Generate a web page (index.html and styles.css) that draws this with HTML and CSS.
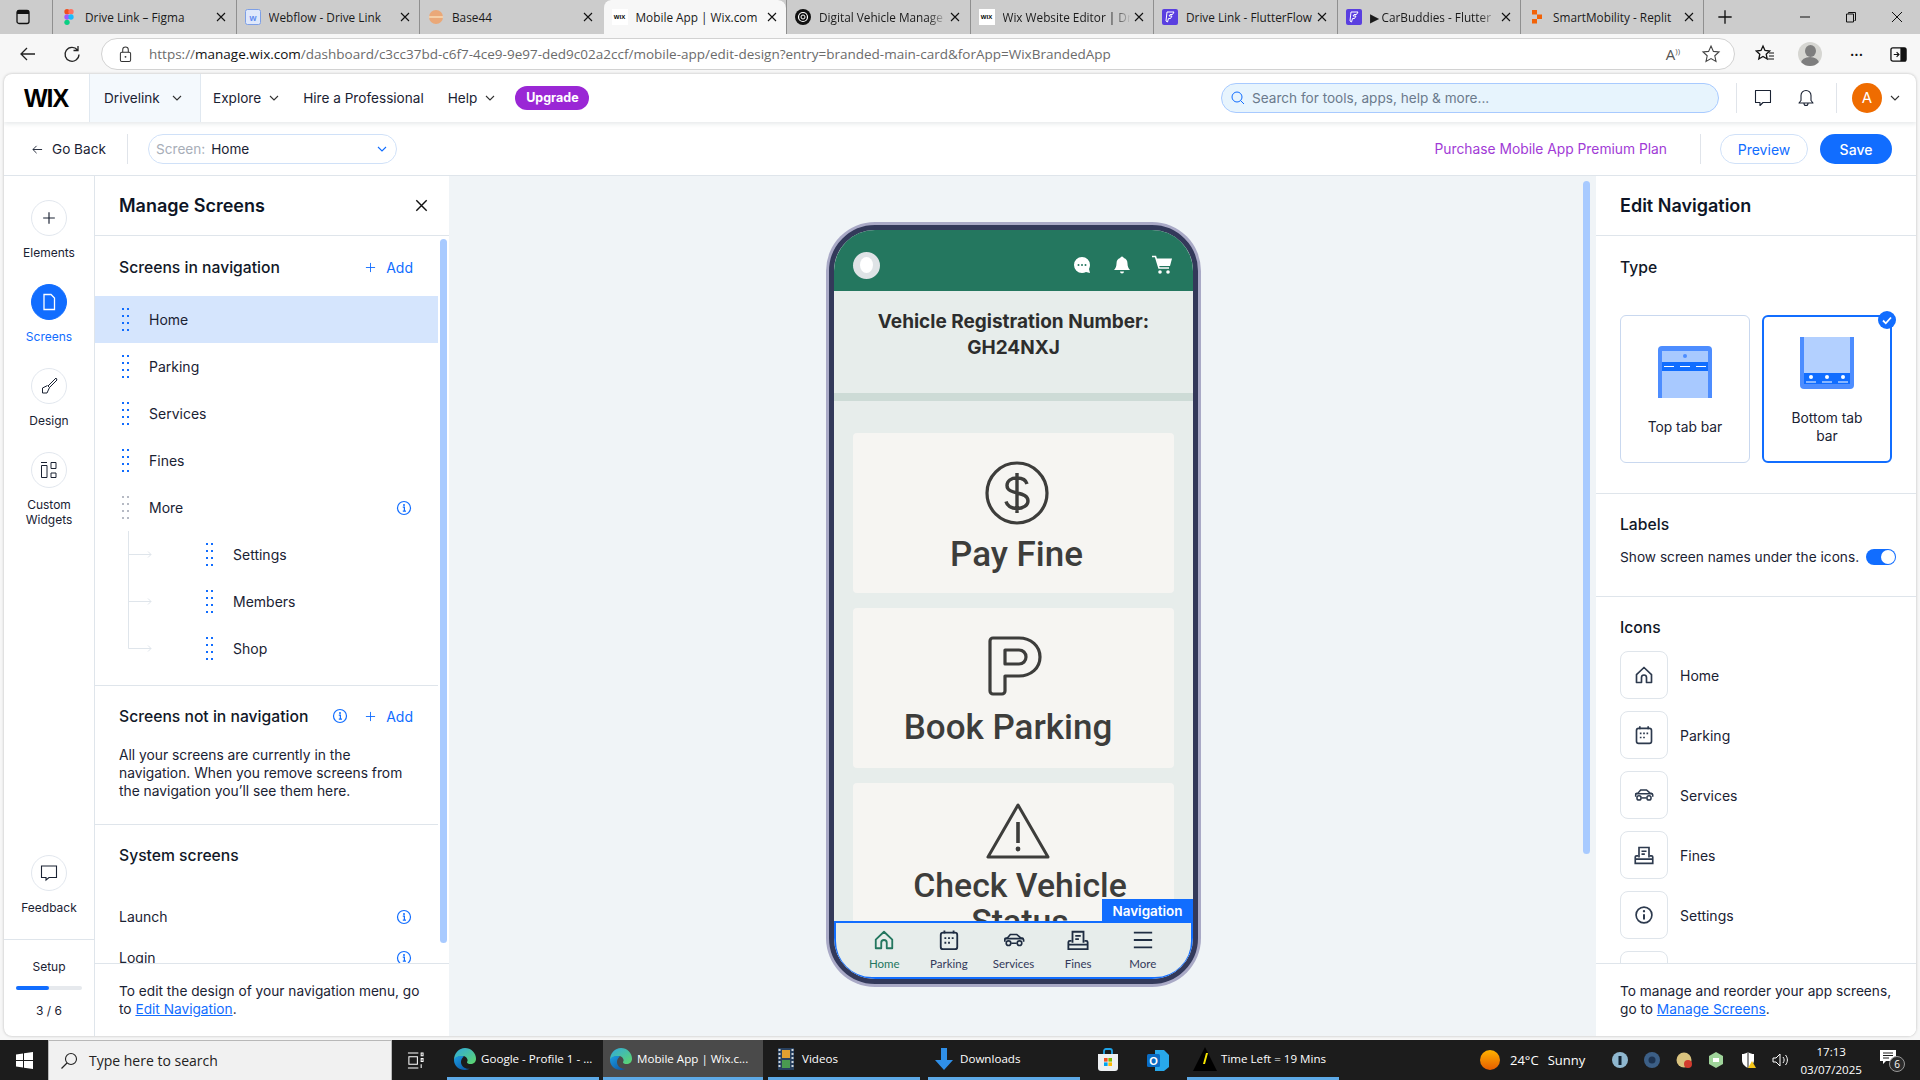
FILE: index.html
```html
<!DOCTYPE html>
<html lang="en">
<head>
  <meta charset="UTF-8" />
  <title>Mobile App | Wix.com</title>
  <link rel="stylesheet" href="styles.css">
</head>
<body>

  <svg class="defs" aria-hidden="true">
    <defs>
      <linearGradient id="edgeTop" x1="0" y1="0" x2="1" y2="1"><stop offset="0" stop-color="#2fa8e0"/><stop offset="1" stop-color="#5fd86a"/></linearGradient>
      <linearGradient id="edgeLow" x1="0" y1="0" x2="1" y2="1"><stop offset="0" stop-color="#1b9de2"/><stop offset="1" stop-color="#0c4f9e"/></linearGradient>
      <linearGradient id="sun" x1="0" y1="0" x2="0" y2="1"><stop offset="0" stop-color="#ffb300"/><stop offset="1" stop-color="#e65c00"/></linearGradient>
      <symbol id="drag" viewBox="0 0 7 23"><g fill="currentColor"><rect x="0" y="0" width="2" height="2"/><rect x="5" y="0" width="2" height="2"/><rect x="0" y="7" width="2" height="2"/><rect x="5" y="7" width="2" height="2"/><rect x="0" y="14" width="2" height="2"/><rect x="5" y="14" width="2" height="2"/><rect x="0" y="21" width="2" height="2"/><rect x="5" y="21" width="2" height="2"/></g></symbol>
      <symbol id="info" viewBox="0 0 16 16"><circle cx="8" cy="8" r="6.500" fill="none" stroke="currentColor" stroke-width="1.200"/><circle cx="8" cy="5" r="1" fill="currentColor"/><path d="M6.800 7.200H8.400V11M6.800 11.200h3.200" fill="none" stroke="currentColor" stroke-width="1.200"/></symbol>
      <symbol id="plus" viewBox="0 0 12 12"><path d="M6 1v10M1 6h10" fill="none" stroke="currentColor" stroke-width="1"/></symbol>
      <symbol id="chev" viewBox="0 0 10 6"><path d="M1 1l4 4 4-4" fill="none" stroke="currentColor" stroke-width="1.100"/></symbol>
      <symbol id="closex" viewBox="0 0 10 10"><path d="M1 1l8 8M9 1l-8 8" fill="none" stroke="currentColor" stroke-width="1.100"/></symbol>
      <symbol id="edge" viewBox="0 0 24 24"><path d="M12 1a11 11 0 0 1 11 11c0 3-2.500 5-5.500 5-2 0-3.500-.7-3.500-1.800 0-.6.6-.8.6-1.700 0-2.400-2.300-4.500-5-4.500C6 9 2 11 1 13 1 6 6 1 12 1z" fill="url(#edgeTop)"/><path d="M1 13c0 6 5 10 11 10 2 0 4-.6 5-1.400-4 1-9-2-9-6.600 0-2.600 1.300-4.500 3-5.500-1-.4-2-.5-3-.5C4 9 1 11 1 13z" fill="url(#edgeLow)"/></symbol>
      <symbol id="flutter" viewBox="0 0 16 16"><rect width="16" height="16" rx="2" fill="#5a3fe0"/><path d="M5 3h7L10.500 5.500H8L7 7h3L8.500 9.500H6.500L5.500 13 4 12z" fill="none" stroke="#fff" stroke-width="1"/></symbol>
      <symbol id="navhome" viewBox="0 0 24 24"><path d="M3 11.500L12 3l9 8.500V21h-6v-6a3 3 0 0 0-6 0v6H3z" fill="none" stroke="currentColor" stroke-width="2" stroke-linejoin="round"/></symbol>
      <symbol id="navcal" viewBox="0 0 24 24"><rect x="3" y="4" width="18" height="18" rx="2.500" fill="none" stroke="currentColor" stroke-width="2"/><path d="M7 1.500V5M17 1.500V5" stroke="currentColor" stroke-width="2"/><path d="M7 10h2M11 10h2M15 10h2M7 15h2M11 15h2" stroke="currentColor" stroke-width="2"/></symbol>
      <symbol id="navcar" viewBox="0 0 24 24"><path d="M2 14v-2.500C2 10 3 9.800 5 9.500L8 6h7l4 3.500c2 .2 3.500 1 3.500 2.500v2" fill="none" stroke="currentColor" stroke-width="1.800"/><path d="M1.500 10.500h21" stroke="currentColor" stroke-width="1.800"/><path d="M9 15.500h6" stroke="currentColor" stroke-width="1.800"/><circle cx="6" cy="15.500" r="2.500" fill="none" stroke="currentColor" stroke-width="1.800"/><circle cx="18" cy="15.500" r="2.500" fill="none" stroke="currentColor" stroke-width="1.800"/></symbol>
      <symbol id="navfine" viewBox="0 0 24 24"><path d="M6 15V3h12v12" fill="none" stroke="currentColor" stroke-width="2"/><path d="M9 7.500h6M9 11h4" stroke="currentColor" stroke-width="2"/><path d="M5 13H3a1.500 1.500 0 0 0-1.500 1.500V22h21v-7.500A1.500 1.500 0 0 0 21 13h-2M2 17h20" fill="none" stroke="currentColor" stroke-width="2"/></symbol>
      <symbol id="navinfo" viewBox="0 0 24 24"><circle cx="12" cy="12" r="9.500" fill="none" stroke="currentColor" stroke-width="2"/><circle cx="12" cy="7.500" r="1.400" fill="currentColor"/><path d="M12 11v6.500" stroke="currentColor" stroke-width="2.400"/></symbol>
    </defs>
  </svg>

  <div class="tabstrip">
    <div class="tab-start">
      <svg class="ico-win" viewBox="0 0 16 16"><rect x="2" y="1.500" width="12" height="13" rx="2" fill="none" stroke="#111" stroke-width="1.300"/><rect x="2" y="1.500" width="12" height="3.500" fill="#111"/></svg>
    </div>
    <div class="tab">
      <svg class="favicon" viewBox="0 0 16 24"><circle cx="5" cy="4" r="4" fill="#f24e1e"/><circle cx="11" cy="4" r="4" fill="#ff7262"/><circle cx="5" cy="12" r="4" fill="#a259ff"/><circle cx="11" cy="12" r="4" fill="#1abcfe"/><circle cx="5" cy="20" r="4" fill="#0acf83"/></svg>
      <span class="tab-title">Drive Link – Figma</span>
      <svg class="tab-x"><use href="#closex"/></svg>
    </div>
    <div class="tab">
      <svg class="favicon" viewBox="0 0 16 16"><rect x=".5" y=".5" width="15" height="15" rx="2" fill="#dfe8fb" stroke="#7d9fe6"/><text x="8" y="11.500" font-size="9" font-weight="700" fill="#5f8cf0" text-anchor="middle" font-family="Liberation Sans">w</text></svg>
      <span class="tab-title">Webflow - Drive Link</span>
      <svg class="tab-x"><use href="#closex"/></svg>
    </div>
    <div class="tab">
      <svg class="favicon" viewBox="0 0 16 16"><circle cx="8" cy="8" r="7" fill="#eaa878"/><rect x="1" y="7" width="14" height="2" fill="#f5cfa6"/></svg>
      <span class="tab-title">Base44</span>
      <svg class="tab-x"><use href="#closex"/></svg>
    </div>
    <div class="tab tab-active">
      <span class="favicon fav-wix">WIX</span>
      <span class="tab-title">Mobile App | Wix.com</span>
      <svg class="tab-x"><use href="#closex"/></svg>
    </div>
    <div class="tab">
      <svg class="favicon" viewBox="0 0 16 16"><circle cx="8" cy="8" r="8" fill="#111"/><circle cx="8" cy="8" r="4.500" fill="none" stroke="#fff" stroke-width="1.200"/><circle cx="8" cy="8" r="2" fill="none" stroke="#fff" stroke-width="1"/></svg>
      <span class="tab-title tab-fade">Digital Vehicle Manage</span>
      <svg class="tab-x"><use href="#closex"/></svg>
    </div>
    <div class="tab">
      <span class="favicon fav-wix">WIX</span>
      <span class="tab-title tab-fade">Wix Website Editor | Dr</span>
      <svg class="tab-x"><use href="#closex"/></svg>
    </div>
    <div class="tab">
      <svg class="favicon"><use href="#flutter"/></svg>
      <span class="tab-title">Drive Link - FlutterFlow</span>
      <svg class="tab-x"><use href="#closex"/></svg>
    </div>
    <div class="tab">
      <svg class="favicon"><use href="#flutter"/></svg>
      <span class="tab-title tab-fade">▶ CarBuddies - Flutter</span>
      <svg class="tab-x"><use href="#closex"/></svg>
    </div>
    <div class="tab tab-last">
      <svg class="favicon" viewBox="0 0 16 16"><rect x="3" y="1" width="5" height="4.500" fill="#f26207"/><rect x="8" y="5.500" width="5" height="4.500" fill="#f26207"/><rect x="3" y="10" width="5" height="4.500" fill="#f26207"/></svg>
      <span class="tab-title">SmartMobility - Replit</span>
      <svg class="tab-x"><use href="#closex"/></svg>
    </div>
    <svg class="new-tab"><use href="#plus"/></svg>
    <div class="win-controls">
      <svg viewBox="0 0 12 12"><path d="M1 6h10" stroke="#111" stroke-width="1"/></svg>
      <svg viewBox="0 0 12 12"><path d="M3.500 2.500V1.500h7v8h-1M1.500 3h7v8h-7z" fill="none" stroke="#111" stroke-width="1"/></svg>
      <svg viewBox="0 0 12 12"><path d="M1 1l10 10M11 1L1 11" stroke="#111" stroke-width="1"/></svg>
    </div>
  </div>

  <div class="toolbar">
    <svg class="tool-btn" viewBox="0 0 20 20"><path d="M17 10H3M9 4l-6 6 6 6" fill="none" stroke="#222" stroke-width="1.300"/></svg>
    <svg class="tool-btn" viewBox="0 0 20 20"><path d="M15.500 6A7 7 0 1 0 17 10.500M16 2v4.500h-4.500" fill="none" stroke="#222" stroke-width="1.300"/></svg>
    <div class="address">
      <svg class="lock" viewBox="0 0 14 18"><rect x="1.500" y="6.500" width="11" height="10" rx="1.500" fill="none" stroke="#333" stroke-width="1.100"/><path d="M4 6.500V4a3 3 0 0 1 6 0v2.500" fill="none" stroke="#333" stroke-width="1.100"/><circle cx="7" cy="11.500" r="1" fill="#333"/></svg>
      <span class="url"><span class="url-dim">https://</span>manage.wix.com<span class="url-dim">/dashboard/c3cc37bd-c6f7-4ce9-9e97-ded9c02a2ccf/mobile-app/edit-design?entry=branded-main-card&amp;forApp=WixBrandedApp</span></span>
      <span class="read-aloud">A<small>))</small></span>
      <svg class="addr-star" viewBox="0 0 20 20"><path d="M10 2l2.400 5.400 5.600.6-4.200 3.800 1.200 5.700L10 14.600 5 17.500l1.200-5.700L2 8l5.600-.6z" fill="none" stroke="#444" stroke-width="1.100"/></svg>
    </div>
    <svg class="tool-fav" viewBox="0 0 20 20"><path d="M8 2l2 4.500 4.700.5-3.500 3.200 1 4.800L8 12.500 3.800 15l1-4.800L1.300 7 6 6.500z" fill="none" stroke="#111" stroke-width="1.300"/><path d="M14 9h5M14 12h5M13 15h6" stroke="#111" stroke-width="1.200"/></svg>
    <div class="profile"><span class="profile-head"></span><span class="profile-body"></span></div>
    <span class="tool-dots">···</span>
    <svg class="tool-side" viewBox="0 0 18 18"><rect x="1" y="2" width="16" height="14" rx="2" fill="none" stroke="#111" stroke-width="1.400"/><rect x="11" y="2" width="6" height="14" fill="#111"/><path d="M4 9h5M7 6.500L9.500 9 7 11.500" fill="none" stroke="#111" stroke-width="1.200"/></svg>
  </div>

  <div class="app">
    <header class="topbar">
      <div class="logo">WIX</div>
      <div class="site-switch">Drivelink <svg class="chev"><use href="#chev"/></svg></div>
      <nav class="topnav">
        <a>Explore <svg class="chev"><use href="#chev"/></svg></a>
        <a>Hire a Professional</a>
        <a>Help <svg class="chev"><use href="#chev"/></svg></a>
      </nav>
      <span class="upgrade">Upgrade</span>
      <div class="search">
        <svg class="search-ico" viewBox="0 0 16 16"><circle cx="7" cy="7" r="5" fill="none" stroke="#116dff" stroke-width="1"/><path d="M10.500 10.500L14 14" stroke="#116dff" stroke-width="1"/></svg>
        <span>Search for tools, apps, help &amp; more...</span>
      </div>
      <span class="vsep"></span>
      <svg class="top-ico" viewBox="0 0 20 20"><path d="M2.500 2.500h15v12H10l-3 3v-3H2.500z" fill="none" stroke="#1a2233" stroke-width="1.100" stroke-linejoin="round"/></svg>
      <svg class="top-ico" viewBox="0 0 20 20"><path d="M10 2.500a5 5 0 0 0-5 5v5l-2 2.500h14l-2-2.500v-5a5 5 0 0 0-5-5zM8 15.500a2 2 0 0 0 4 0" fill="none" stroke="#1a2233" stroke-width="1.100" stroke-linejoin="round"/></svg>
      <span class="vsep"></span>
      <span class="avatar">A</span>
      <svg class="chev"><use href="#chev"/></svg>
    </header>

    <div class="subbar">
      <a class="go-back">
        <svg class="back-arrow" viewBox="0 0 12 12"><path d="M11 6H1M5 2L1 6l4 4" fill="none" stroke="#1a2233" stroke-width="1"/></svg>
        Go Back
      </a>
      <span class="vsep vsep-sub"></span>
      <div class="screen-select">
        <span class="select-label">Screen:</span>
        <span class="select-value">Home</span>
        <svg class="chev chev-blue"><use href="#chev"/></svg>
      </div>
      <span class="purchase">Purchase Mobile App Premium Plan</span>
      <span class="vsep vsep-sub vsep-buy"></span>
      <button class="btn-preview">Preview</button>
      <button class="btn-save">Save</button>
    </div>

    <div class="workspace">
      <aside class="rail">
        <div class="rail-item">
          <span class="rail-circle"><svg class="rail-ico rail-plus"><use href="#plus"/></svg></span>
          <span>Elements</span>
        </div>
        <div class="rail-item rail-active">
          <span class="rail-circle">
            <svg class="rail-ico" viewBox="0 0 20 20"><path d="M5 2.500h7l3.500 3.500v11.500H5z" fill="none" stroke="#fff" stroke-width="1.300"/></svg>
          </span>
          <span>Screens</span>
        </div>
        <div class="rail-item">
          <span class="rail-circle">
            <svg class="rail-ico" viewBox="0 0 20 20"><path d="M17 2L9 10l1.500 1.500L18 4zM8.500 9.500L3.500 12v5h4.500l2.500-5.500" fill="none" stroke="#1a2233" stroke-width="1"/></svg>
          </span>
          <span>Design</span>
        </div>
        <div class="rail-item">
          <span class="rail-circle">
            <svg class="rail-ico" viewBox="0 0 20 20"><path d="M2 2.500h6" stroke="#1a2233"/><path d="M2.500 5.500h5.500v12H2.500zM12 2.500h5v6h-5zM12 13h5v4.500h-5z" fill="none" stroke="#1a2233"/></svg>
          </span>
          <span class="rail-two">Custom Widgets</span>
        </div>
        <div class="rail-item rail-feedback">
          <span class="rail-circle">
            <svg class="rail-ico" viewBox="0 0 20 20"><path d="M2.500 3h15v11.500H10l-3 2.500v-2.500H2.500z" fill="none" stroke="#1a2233" stroke-width="1.100"/></svg>
          </span>
          <span>Feedback</span>
        </div>
        <div class="setup">
          <span>Setup</span>
          <div class="setup-bar"><div class="setup-fill"></div></div>
          <span class="setup-count">3 / 6</span>
        </div>
      </aside>

      <section class="panel panel-left">
        <div class="panel-head">
          <h2>Manage Screens</h2>
          <svg class="panel-close"><use href="#closex"/></svg>
        </div>
        <div class="panel-body">
          <div class="panel-scroll">
            <div class="block block-nav">
              <div class="block-head">
                <h3>Screens in navigation</h3>
                <a class="add"><svg class="add-plus"><use href="#plus"/></svg>Add</a>
              </div>
              <ul class="screen-list">
                <li class="screen-row screen-selected"><svg class="drag"><use href="#drag"/></svg>Home</li>
                <li class="screen-row"><svg class="drag"><use href="#drag"/></svg>Parking</li>
                <li class="screen-row"><svg class="drag"><use href="#drag"/></svg>Services</li>
                <li class="screen-row"><svg class="drag"><use href="#drag"/></svg>Fines</li>
                <li class="screen-row"><svg class="drag drag-off"><use href="#drag"/></svg>More<svg class="info info-row"><use href="#info"/></svg></li>
              </ul>
              <ul class="screen-list sub-list">
                <li class="screen-row sub-row"><svg class="tree" viewBox="0 0 24 47"><path d="M.5 0V47M.5 23.500H23M20 20.500l3 3-3 3" fill="none" stroke="#dfe5eb"/></svg><svg class="drag"><use href="#drag"/></svg>Settings</li>
                <li class="screen-row sub-row"><svg class="tree" viewBox="0 0 24 47"><path d="M.5 0V47M.5 23.500H23M20 20.500l3 3-3 3" fill="none" stroke="#dfe5eb"/></svg><svg class="drag"><use href="#drag"/></svg>Members</li>
                <li class="screen-row sub-row"><svg class="tree" viewBox="0 0 24 47"><path d="M.5 0V23.500H23M20 20.500l3 3-3 3" fill="none" stroke="#dfe5eb"/></svg><svg class="drag"><use href="#drag"/></svg>Shop</li>
              </ul>
            </div>
            <div class="block block-off">
              <div class="block-head">
                <h3>Screens not in navigation</h3>
                <svg class="info info-head"><use href="#info"/></svg>
                <a class="add"><svg class="add-plus"><use href="#plus"/></svg>Add</a>
              </div>
              <p>All your screens are currently in the navigation. When you remove screens from the navigation you’ll see them here.</p>
            </div>
            <div class="block block-system">
              <div class="block-head"><h3>System screens</h3></div>
              <div class="system-row">Launch<svg class="info"><use href="#info"/></svg></div>
              <div class="system-row">Login<svg class="info"><use href="#info"/></svg></div>
            </div>
          </div>
          <div class="thumb thumb-left"></div>
        </div>
        <div class="panel-foot">To edit the design of your navigation menu, go to <a>Edit Navigation</a>.</div>
      </section>

      <main class="canvas">
        <div class="stage">
          <div class="phone">
            <div class="screen">
              <div class="app-head">
                <span class="app-avatar"><span></span></span>
                <svg class="app-ico" viewBox="0 0 20 20"><path d="M10 2a8 8 0 1 0 0 16c1.500 0 2.800-.3 4-1l4 1-1-4c.6-1.200 1-2.500 1-4a8 8 0 0 0-8-8z" fill="#fff"/><g fill="#24775f"><circle cx="6.500" cy="10" r="1"/><circle cx="10" cy="10" r="1"/><circle cx="13.500" cy="10" r="1"/></g></svg>
                <svg class="app-ico" viewBox="0 0 20 20"><path d="M10 1.500a2 2 0 0 1 1.800 1.500c2.500.8 3.700 2.800 3.700 5.500 0 3 1 5 2.500 6.500H2c1.500-1.500 2.500-3.500 2.500-6.500 0-2.700 1.200-4.700 3.700-5.500A2 2 0 0 1 10 1.500zM8 16.500h4a2 2 0 0 1-4 0z" fill="#fff"/></svg>
                <svg class="app-ico app-cart" viewBox="0 0 22 20"><path d="M1 1.500h3.500L8 13h10" fill="none" stroke="#fff" stroke-width="1.600"/><path d="M5.500 3.500H21l-2 7.500H7.500z" fill="#fff"/><circle cx="9" cy="17" r="1.800" fill="#fff"/><circle cx="17" cy="17" r="1.800" fill="#fff"/></svg>
              </div>
              <div class="reg">Vehicle Registration Number:<br>GH24NXJ</div>
              <div class="reg-line"></div>
              <div class="cards">
                <div class="card card-pay">
                  <svg class="card-ico ico-pay" viewBox="0 0 64 64"><circle cx="32" cy="32" r="30" fill="none" stroke="#3d3d3b" stroke-width="3.200"/><path d="M42 23c-1-4-5-6-10-6-6 0-10 3-10 7.500 0 10 21 5 21 15.500 0 4.500-5 7.500-11 7.500s-10-3-11-7M32 12v40" fill="none" stroke="#3d3d3b" stroke-width="3.400"/></svg>
                  <span class="card-text">Pay Fine</span>
                </div>
                <div class="card card-book">
                  <svg class="card-ico ico-park" viewBox="0 0 56 60"><path d="M3 5a3 3 0 0 1 3-3h26c12 0 21 8 21 19s-9 19-21 19H18v15a3 3 0 0 1-3 3H6a3 3 0 0 1-3-3z M18 14v14h14c4 0 7-3 7-7s-3-7-7-7z" fill="none" stroke="#3d3d3b" stroke-width="3.200" stroke-linejoin="round"/></svg>
                  <span class="card-text">Book Parking</span>
                </div>
                <div class="card card-check">
                  <svg class="card-ico ico-warn" viewBox="0 0 64 56"><path d="M32 2L2 54h60z" fill="none" stroke="#3d3d3b" stroke-width="3" stroke-linejoin="round"/><path d="M32 19v21" stroke="#3d3d3b" stroke-width="3.600"/><circle cx="32" cy="46" r="2.400" fill="#3d3d3b"/></svg>
                  <span class="card-text">Check Vehicle Status</span>
                </div>
              </div>
              <span class="nav-tag">Navigation</span>
              <nav class="tabbar">
                <div class="tabbar-item tabbar-on"><svg><use href="#navhome"/></svg>Home</div>
                <div class="tabbar-item"><svg><use href="#navcal"/></svg>Parking</div>
                <div class="tabbar-item"><svg><use href="#navcar"/></svg>Services</div>
                <div class="tabbar-item"><svg><use href="#navfine"/></svg>Fines</div>
                <div class="tabbar-item"><svg viewBox="0 0 24 24"><path d="M2 4h20M2 12h20M2 20h20" stroke="currentColor" stroke-width="2"/></svg>More</div>
              </nav>
            </div>
          </div>
        </div>
        <div class="thumb thumb-canvas"></div>
      </main>

      <section class="panel panel-right">
        <div class="panel-head"><h2>Edit Navigation</h2></div>
        <div class="panel-body">
          <div class="panel-scroll">
            <div class="block block-type">
              <h3>Type</h3>
              <div class="type-cards">
                <div class="type-card">
                  <svg class="type-ico" viewBox="0 0 54 52"><path d="M0 52V4a4 4 0 0 1 4-4h46a4 4 0 0 1 4 4v48z" fill="#4d8dff"/><rect x="4" y="5" width="46" height="47" fill="#a8c9ff"/><rect x="4" y="16" width="46" height="9" fill="#116dff"/><circle cx="27" cy="10" r="2" fill="#4d8dff"/><path d="M6 20.500h10M22 20.500h10M38 20.500h10" stroke="#fff"/></svg>
                  <span>Top tab bar</span>
                </div>
                <div class="type-card type-selected">
                  <span class="type-check"><svg viewBox="0 0 12 12"><path d="M2 6.500l2.800 2.800L10 3.500" fill="none" stroke="#fff" stroke-width="1.800"/></svg></span>
                  <svg class="type-ico" viewBox="0 0 54 52"><path d="M0 0V48a4 4 0 0 0 4 4h46a4 4 0 0 0 4-4V0z" fill="#4d8dff"/><rect x="4" y="0" width="46" height="47" fill="#b3d0ff"/><rect x="4" y="36" width="46" height="11" fill="#116dff"/><circle cx="11" cy="40" r="2" fill="#fff"/><circle cx="27" cy="40" r="2" fill="#fff"/><circle cx="43" cy="40" r="2" fill="#fff"/><path d="M6 45h10M22 45h10M38 45h10" stroke="#fff"/></svg>
                  <span>Bottom tab bar</span>
                </div>
              </div>
            </div>
            <div class="block block-labels">
              <h3>Labels</h3>
              <div class="toggle-row">Show screen names under the icons.<span class="toggle"><span></span></span></div>
            </div>
            <div class="block block-icons">
              <h3>Icons</h3>
              <div class="icon-row"><span class="icon-box"><svg><use href="#navhome"/></svg></span>Home</div>
              <div class="icon-row"><span class="icon-box"><svg><use href="#navcal"/></svg></span>Parking</div>
              <div class="icon-row"><span class="icon-box"><svg><use href="#navcar"/></svg></span>Services</div>
              <div class="icon-row"><span class="icon-box"><svg><use href="#navfine"/></svg></span>Fines</div>
              <div class="icon-row"><span class="icon-box"><svg><use href="#navinfo"/></svg></span>Settings</div>
              <div class="icon-row"><span class="icon-box"></span></div>
            </div>
          </div>
        </div>
        <div class="panel-foot">To manage and reorder your app screens, go to <a>Manage Screens</a>.</div>
      </section>
    </div>
  </div>

  <footer class="taskbar">
    <div class="start">
      <svg viewBox="0 0 17 17"><path d="M0 2.400L7 1.400v6.600H0zM8 1.300L17 0v8H8zM0 9h7v6.600L0 14.600zM8 9h9v8L8 15.700z" fill="#fff"/></svg>
    </div>
    <div class="task-search">
      <svg viewBox="0 0 18 18"><circle cx="11" cy="7" r="5.500" fill="none" stroke="#222" stroke-width="1.100"/><path d="M7 11l-5.500 5.500" stroke="#222" stroke-width="1.300"/></svg>
      <span>Type here to search</span>
    </div>
    <svg class="task-view" viewBox="0 0 18 18"><path d="M1 1h11M1 17h11M2 5h9v8H2zM15 1h2v3h-2zM15 7h2v3h-2zM15 13v4" fill="none" stroke="#fff" stroke-width="1.100"/></svg>
    <div class="task-item"><svg class="task-logo"><use href="#edge"/></svg>Google - Profile 1 - ...</div>
    <div class="task-item task-current"><svg class="task-logo"><use href="#edge"/></svg>Mobile App | Wix.c...</div>
    <div class="task-item"><svg class="task-logo" viewBox="0 0 24 24"><rect x="4" y="1" width="16" height="22" fill="#28405e"/><rect x="8" y="3" width="8" height="8" fill="#e0a030"/><rect x="8" y="13" width="8" height="8" fill="#4a9a50"/><path d="M5.500 2v20M18.500 2v20" stroke="#cfd8e0" stroke-dasharray="2 2" stroke-width="2"/></svg>Videos</div>
    <div class="task-item task-dl"><svg class="task-logo" viewBox="0 0 24 24"><path d="M9 1h6v12h6L12 23 3 13h6z" fill="#2f8fe8"/></svg>Downloads</div>
    <svg class="task-app" viewBox="0 0 24 24"><path d="M2 6h20v14a3 3 0 0 1-3 3H5a3 3 0 0 1-3-3z" fill="#eef0f2"/><path d="M8 6V3a2 2 0 0 1 2-2h4a2 2 0 0 1 2 2v3" fill="none" stroke="#1fa3e8" stroke-width="1.800"/><rect x="8" y="10" width="3.600" height="3.600" fill="#f25022"/><rect x="12.400" y="10" width="3.600" height="3.600" fill="#7fba00"/><rect x="8" y="14.400" width="3.600" height="3.600" fill="#00a4ef"/><rect x="12.400" y="14.400" width="3.600" height="3.600" fill="#ffb900"/></svg>
    <svg class="task-app task-outlook" viewBox="0 0 24 24"><path d="M9 2h9l5 5v12l-5 4H9z" fill="#28a8ea"/><rect x="1" y="6" width="13" height="13" rx="1.500" fill="#0a6cc4"/><text x="7.500" y="16.500" font-size="11" font-weight="700" fill="#fff" text-anchor="middle" font-family="Liberation Sans">O</text></svg>
    <div class="task-item task-time"><svg class="task-logo" viewBox="0 0 24 24"><path d="M12 0L24 24H0z" fill="#000"/><path d="M13 6l-3 11h2l3-11z" fill="#f5e500"/></svg>Time Left = 19 Mins</div>
    <svg class="weather-sun" viewBox="0 0 20 20"><circle cx="10" cy="10" r="10" fill="url(#sun)"/></svg>
    <span class="weather-temp">24°C</span>
    <span class="weather-text">Sunny</span>
    <div class="tray">
      <svg viewBox="0 0 18 18"><circle cx="9" cy="9" r="8" fill="#8fb7cf"/><rect x="7.500" y="5" width="3" height="9" fill="#123"/></svg>
      <svg viewBox="0 0 18 18"><circle cx="9" cy="9" r="8" fill="#3c5f86"/><circle cx="9" cy="9" r="3.500" fill="#1d3350"/></svg>
      <svg viewBox="0 0 18 18"><circle cx="9" cy="9" r="7.500" fill="#d9c27e"/><circle cx="13" cy="13" r="4" fill="#d23b2e"/></svg>
      <svg viewBox="0 0 18 18"><path d="M9 1l7 4v8l-7 4-7-4V5z" fill="#9fd49a"/><rect x="6" y="7" width="6" height="4" fill="#fff"/></svg>
      <svg viewBox="0 0 18 18"><path d="M9 1c2 1.500 4 2 6 2v6c0 4-3 6.500-6 8-3-1.500-6-4-6-8V3c2 0 4-.5 6-2z" fill="#fff"/><path d="M9 1v16" stroke="#1c1c1c"/><path d="M13 10l4 7H9z" fill="#f5c518"/></svg>
      <svg viewBox="0 0 18 18"><path d="M2 7h3l4-4v12l-4-4H2zM12 6c1.500 2 1.500 4 0 6M14.500 4c2.500 3 2.500 7 0 10" fill="none" stroke="#fff"/></svg>
    </div>
    <div class="clock"><span>17:13</span><span>03/07/2025</span></div>
    <div class="notify">
      <svg viewBox="0 0 18 18"><path d="M1 1h16v11H7l-3 3v-3H1z" fill="#fff"/><path d="M4 4h10M4 6.500h10M4 9h6" stroke="#1c1c1c"/></svg>
      <span class="notify-count">6</span>
    </div>
  </footer>

</body>
</html>
```

FILE: styles.css
```css
* {
  box-sizing: border-box;
}
html, body {
  margin: 0;
  padding: 0;
}
body {
  width: 1920px;
  height: 1080px;
  overflow: hidden;
  display: flex;
  flex-direction: column;
  background-color: #f7f7f7;
  font-family: "Inter", "Liberation Sans", sans-serif;
  font-size: 13.600px;
  color: #1a2233;
}
h2, h3, p, ul {
  margin: 0;
  padding: 0;
}
ul {
  list-style: none;
}
.defs {
  position: absolute;
  width: 0;
  height: 0;
}

/* browser tabs */
.tabstrip {
  height: 34px;
  flex: none;
  display: flex;
  align-items: stretch;
  background-color: #cccccc;
  font-family: "Open Sans", "Liberation Sans", sans-serif;
  font-size: 11.800px;
  color: #1a1a1a;
}
.tab-start {
  width: 52px;
  display: flex;
  align-items: center;
  padding-left: 15px;
}
.ico-win {
  width: 16px;
  height: 16px;
}
.tab {
  width: 183.500px;
  display: flex;
  align-items: center;
  padding-left: 8px;
  position: relative;
  border-left: 1px solid #8f8f8f;
  background-clip: padding-box;
}
.tab-last {
  border-right: 1px solid #8f8f8f;
}
.tab-active {
  background-color: #f7f7f7;
  border-left-color: transparent;
  border-radius: 8px 8px 0 0;
}
.favicon {
  width: 16px;
  height: 16px;
  flex: none;
  margin-right: 8px;
}
.fav-wix {
  background-color: #fff;
  color: #000;
  font-family: "Liberation Sans", sans-serif;
  font-size: 6px;
  font-weight: 700;
  line-height: 16px;
  text-align: center;
}
.tab-title {
  width: 128px;
  white-space: nowrap;
  overflow: hidden;
}
.tab-fade {
  -webkit-mask-image: linear-gradient(to right, #000 85%, transparent);
}
.tab-x {
  width: 10px;
  height: 10px;
  color: #111;
  margin-left: 3px;
}
.new-tab {
  width: 16px;
  height: 16px;
  color: #111;
  align-self: center;
  margin-left: 13px;
}
.win-controls {
  margin-left: auto;
  width: 138px;
  display: flex;
  align-items: center;
  justify-content: space-between;
  padding: 0 17px 0 17px;
}
.win-controls svg {
  width: 12px;
  height: 12px;
}

/* browser toolbar */
.toolbar {
  height: 40px;
  flex: none;
  display: flex;
  align-items: center;
  background-color: #f7f7f7;
}
.tool-btn {
  width: 20px;
  height: 20px;
  margin-left: 18px;
}
.tool-btn + .tool-btn {
  margin-left: 24px;
  margin-right: 19px;
}
.address {
  width: 1634px;
  height: 32px;
  flex: none;
  display: flex;
  align-items: center;
  background-color: #fff;
  border: 1px solid #d2d2d2;
  border-radius: 16px;
  padding-left: 17px;
}
.lock {
  width: 13px;
  height: 17px;
  margin-right: 17px;
}
.url {
  font-family: "Open Sans", "Liberation Sans", sans-serif;
  font-size: 13.500px;
  color: #111;
  white-space: nowrap;
}
.url-dim {
  color: #6b6b6b;
}
.read-aloud {
  margin-left: auto;
  font-family: "Open Sans", sans-serif;
  font-size: 15px;
  color: #555;
}
.read-aloud small {
  font-size: 8px;
  vertical-align: 6px;
}
.addr-star {
  width: 20px;
  height: 20px;
  margin: 0 13px 0 21px;
}
.tool-fav {
  width: 20px;
  height: 20px;
  margin-left: 20px;
  flex: none;
}
.profile {
  width: 24px;
  height: 24px;
  flex: none;
  margin-left: 23px;
  border-radius: 50%;
  background-color: #d6d6d2;
  overflow: hidden;
  display: flex;
  flex-direction: column;
  align-items: center;
}
.profile-head {
  width: 11px;
  height: 12px;
  flex: none;
  margin-top: 3px;
  border-radius: 50%;
  background-color: #7e7e7e;
}
.profile-body {
  width: 18px;
  height: 12px;
  flex: none;
  border-radius: 50%;
  background-color: #7e7e7e;
}
.tool-dots {
  margin-left: 28px;
  font-weight: 700;
  font-size: 13px;
  color: #111;
}
.tool-side {
  width: 17px;
  height: 17px;
  flex: none;
  margin-left: 27px;
}

/* app frame */
.app {
  height: 962px;
  flex: none;
  margin: 0 4px;
  display: flex;
  flex-direction: column;
  background-color: #fff;
  border-radius: 8px;
  box-shadow: 0 0 3px rgba(0, 0, 0, 0.25);
  overflow: hidden;
}
.topbar {
  height: 48px;
  flex: none;
  display: flex;
  align-items: center;
  padding-right: 16px;
  box-shadow: 0 2px 4px rgba(22, 45, 61, 0.1);
  position: relative;
}
.logo {
  width: 85px;
  height: 48px;
  padding-left: 20px;
  font-family: "Liberation Sans", sans-serif;
  font-weight: 700;
  font-size: 25px;
  line-height: 48px;
  letter-spacing: -1px;
  color: #000;
}
.site-switch {
  width: 112px;
  height: 48px;
  display: flex;
  align-items: center;
  gap: 12px;
  padding-left: 14px;
  background-color: #f4f9fd;
  border-left: 1px solid #e0e8f0;
  border-right: 1px solid #e0e8f0;
}
.chev {
  width: 10px;
  height: 6px;
  color: #333;
  flex: none;
}
.chev-blue {
  color: #116dff;
}
.topnav {
  display: flex;
  align-items: center;
  margin-left: 12px;
}
.topnav a {
  display: flex;
  align-items: center;
  gap: 8px;
  margin-right: 24px;
}
.upgrade {
  width: 74px;
  height: 24px;
  margin-left: -4px;
  border-radius: 12px;
  background-color: #9a27d5;
  color: #fff;
  font-size: 12.500px;
  font-weight: 700;
  line-height: 24px;
  text-align: center;
}
.search {
  width: 498px;
  height: 30px;
  margin-left: auto;
  display: flex;
  align-items: center;
  gap: 6px;
  padding-left: 8px;
  background-color: #e7f4fd;
  border: 1px solid #a8caff;
  border-radius: 15px;
  color: #6b7a8c;
}
.search-ico {
  width: 16px;
  height: 16px;
}
.vsep {
  width: 1px;
  height: 30px;
  background-color: #e0e4ea;
  flex: none;
}
.search + .vsep {
  margin-left: 17px;
  margin-right: 16px;
}
.top-ico {
  width: 20px;
  height: 20px;
  margin-right: 23px;
  flex: none;
}
.top-ico + .vsep {
  margin-right: 15px;
  margin-left: -3px;
}
.avatar {
  width: 30px;
  height: 30px;
  flex: none;
  border-radius: 50%;
  background-color: #ef6c00;
  color: #fff;
  font-size: 15px;
  line-height: 30px;
  text-align: center;
  margin-right: 8px;
}
.subbar {
  height: 54px;
  flex: none;
  display: flex;
  align-items: center;
  padding-top: 1px;
  border-bottom: 1px solid #dfe5eb;
}
.go-back {
  display: flex;
  align-items: center;
  gap: 9px;
  margin-left: 28px;
  width: 95px;
}
.back-arrow {
  width: 11px;
  height: 11px;
}
.vsep-sub {
  margin-right: 20px;
}
.screen-select {
  width: 249px;
  height: 30px;
  display: flex;
  align-items: center;
  padding: 0 9px 0 7px;
  border: 1px solid #d0e1f8;
  border-radius: 15px;
}
.select-label {
  color: #a8aeb8;
  margin-right: 6px;
}
.select-value {
  flex: 1;
}
.purchase {
  margin-left: auto;
  color: #a13bd6;
  font-size: 13.800px;
}
.vsep-buy {
  margin: 0 19px 0 33px;
}
.btn-preview, .btn-save {
  height: 30px;
  border-radius: 15px;
  font-family: inherit;
  font-size: 14px;
  cursor: pointer;
}
.btn-preview {
  width: 88px;
  background-color: #fff;
  border: 1px solid #d0e1f8;
  color: #116dff;
}
.btn-save {
  width: 72px;
  margin: 0 24px 0 12px;
  background-color: #116dff;
  border: none;
  color: #fff;
  font-weight: 500;
}

/* main area */
.workspace {
  flex: 1;
  min-height: 0;
  display: flex;
}
.rail {
  width: 91px;
  flex: none;
  display: flex;
  flex-direction: column;
  padding-top: 24px;
  border-right: 1px solid #dfe5eb;
  font-size: 12px;
}
.rail-item {
  height: 84px;
  width: 90px;
  display: flex;
  flex-direction: column;
  align-items: center;
  line-height: 16px;
  color: #1a2233;
  text-align: center;
}
.rail-item .rail-circle {
  width: 36px;
  height: 36px;
  flex: none;
  margin-bottom: 9px;
  display: flex;
  align-items: center;
  justify-content: center;
  border: 1px solid #e2e7ee;
  border-radius: 50%;
}
.rail-ico {
  width: 20px;
  height: 20px;
}
.rail-plus {
  width: 14px;
  height: 14px;
  color: #1a2233;
}
.rail-active {
  color: #116dff;
}
.rail-active .rail-circle {
  background-color: #116dff;
  border-color: #116dff;
}
.rail-two {
  width: 60px;
  line-height: 15px;
}
.rail-feedback {
  margin-top: auto;
  height: 61px;
  margin-bottom: 23px;
}
.setup {
  height: 97px;
  flex: none;
  border-top: 1px solid #dfe5eb;
  padding-top: 19px;
  display: flex;
  flex-direction: column;
  align-items: center;
  line-height: 16px;
}
.setup-bar {
  width: 66px;
  height: 4px;
  margin-top: 11px;
  border-radius: 2px;
  background-color: #e6e9ed;
}
.setup-fill {
  width: 50%;
  height: 4px;
  border-radius: 2px;
  background-color: #116dff;
}
.setup-count {
  margin-top: 13px;
}
.panel {
  display: flex;
  flex-direction: column;
  flex: none;
  background-color: #fff;
  font-size: 13.800px;
}
.panel-left {
  width: 354px;
}
.panel-right {
  width: 320px;
}
.panel-head {
  height: 60px;
  flex: none;
  display: flex;
  align-items: center;
  justify-content: space-between;
  padding: 0 21px 0 24px;
  border-bottom: 1px solid #dfe5eb;
}
.panel-head h2 {
  font-size: 18px;
  font-weight: 600;
  color: #0e1526;
}
.panel-close {
  width: 13px;
  height: 13px;
  color: #111;
}
.panel-body {
  flex: 1;
  min-height: 0;
  display: flex;
  overflow: hidden;
}
.panel-scroll {
  flex: 1;
  min-width: 0;
}
.panel-left .panel-scroll {
  width: 343px;
  flex: none;
}
.thumb {
  width: 7px;
  background-color: #a8caff;
  border-radius: 4px;
  flex: none;
}
.thumb-left {
  height: 704px;
  margin: 3px 0 0 2px;
}
.block {
  border-bottom: 1px solid #dfe5eb;
}
.block h3 {
  font-size: 15.700px;
  font-weight: 500;
  line-height: 20px;
  color: #111827;
}
.block-head {
  display: flex;
  align-items: center;
  height: 20px;
  padding: 0 25px 0 24px;
}
.block-nav h3, .block-off h3 {
  margin-top: 2px;
}
.add {
  display: flex;
  align-items: center;
  gap: 10px;
  margin-left: auto;
  color: #116dff;
  font-size: 14px;
}
.add-plus {
  width: 11px;
  height: 11px;
}
.block-nav {
  padding: 21px 0 13px;
}
.block-nav .block-head + .screen-list {
  margin-top: 19px;
}
.screen-row {
  height: 47px;
  display: flex;
  align-items: center;
  padding: 0 26px 0 27px;
  position: relative;
  font-size: 14px;
}
.screen-selected {
  background-color: #d5e5fd;
}
.drag {
  width: 7px;
  height: 23px;
  margin-right: 20px;
  color: #116dff;
  flex: none;
}
.drag-off {
  color: #b6bac4;
}
.info {
  width: 16px;
  height: 16px;
  margin-left: auto;
  color: #116dff;
  flex: none;
}
.sub-row {
  padding-left: 111px;
}
.tree {
  position: absolute;
  left: 33px;
  top: 0;
  width: 24px;
  height: 47px;
}
.block-off {
  padding: 20px 0 24px;
}
.info-head {
  margin-left: 24px;
}
.block-off p {
  margin-top: 20px;
  padding: 0 24px;
  line-height: 18px;
}
.block-system {
  padding-top: 21px;
  border-bottom: none;
}
.system-row {
  height: 41px;
  display: flex;
  align-items: center;
  padding: 0 26px 0 24px;
  font-size: 14px;
}
.block-system .block-head + .system-row {
  margin-top: 30px;
}
.panel-foot {
  height: 73px;
  flex: none;
  border-top: 1px solid #dfe5eb;
  padding: 18px 24px 0 24px;
  font-size: 13.700px;
  line-height: 18px;
  background-color: #fff;
}
.panel-right .panel-foot {
  padding-right: 20px;
}
.panel-foot a {
  color: #116dff;
  text-decoration: underline;
}

/* preview canvas */
.canvas {
  flex: 1;
  min-width: 0;
  display: flex;
  background-color: #f0f4f7;
}
.stage {
  flex: 1;
  display: flex;
  justify-content: center;
  padding: 49px 0 0 2px;
}
.thumb-canvas {
  height: 673px;
  margin: 5px 6px 0 7px;
}
.phone {
  width: 369px;
  height: 759px;
  border: 5px solid #33395a;
  border-radius: 46px;
  box-shadow: 0 0 0 3px #a9a9c6;
  overflow: hidden;
  background-color: #e7edeb;
}
.screen {
  height: 100%;
  display: flex;
  flex-direction: column;
  position: relative;
}
.app-head {
  height: 61px;
  flex: none;
  display: flex;
  align-items: center;
  padding: 9px 20px 0 19px;
  background-color: #24775f;
}
.app-avatar {
  width: 27px;
  height: 27px;
  margin-right: auto;
  border-radius: 50%;
  background-color: #dfe3e6;
  display: flex;
  align-items: center;
  justify-content: center;
}
.app-avatar span {
  width: 13px;
  height: 16px;
  border-radius: 50%;
  background-color: #fff;
}
.app-ico {
  width: 20px;
  height: 20px;
  margin-left: 20px;
}
.app-cart {
  width: 22px;
  margin-left: 19px;
}
.reg {
  height: 102px;
  flex: none;
  padding-top: 18px;
  font-size: 19px;
  font-weight: 700;
  line-height: 26px;
  text-align: center;
  color: #2d2d2d;
}
.reg-line {
  height: 8px;
  flex: none;
  background-color: #cddbd6;
}
.cards {
  flex: 1;
  min-height: 0;
  overflow: hidden;
  padding: 32px 19px 0;
}
.card {
  height: 160px;
  margin-bottom: 15px;
  display: flex;
  flex-direction: column;
  align-items: center;
  background-color: #f6f5f2;
  border-radius: 4px;
  text-align: center;
}
.card-ico {
  display: block;
  flex: none;
}
.card-text {
  font-family: "Roboto", sans-serif;
  font-size: 35px;
  font-weight: 500;
  line-height: 36px;
  color: #3d3d3b;
}
.card-pay {
  padding: 28px 0 0 6px;
}
.ico-pay {
  width: 64px;
  height: 64px;
  margin-bottom: 12px;
}
.card-book {
  padding: 28px 11px 0 0;
}
.ico-park {
  width: 56px;
  height: 60px;
  margin-bottom: 14px;
  margin-left: 13px;
}
.card-check {
  padding: 20px 0 0 13px;
  height: 300px;
}
.ico-warn {
  width: 64px;
  height: 56px;
  margin-bottom: 9px;
  margin-left: -4px;
}
.card-check .card-text {
  width: 240px;
  font-size: 33.800px;
}
.nav-tag {
  position: absolute;
  right: 0;
  bottom: 56px;
  width: 91px;
  height: 24px;
  background-color: #116dff;
  color: #fff;
  font-size: 13.500px;
  font-weight: 600;
  line-height: 24px;
  text-align: center;
}
.tabbar {
  height: 58px;
  flex: none;
  display: flex;
  justify-content: center;
  padding-top: 6px;
  background-color: #e7edeb;
  border: 2px solid #116dff;
  border-radius: 0 0 38px 38px;
}
.tabbar-item {
  width: 64.600px;
  display: flex;
  flex-direction: column;
  align-items: center;
  gap: 6px;
  font-family: "Lato", sans-serif;
  font-size: 11.500px;
  color: #33395a;
}
.tabbar-item svg {
  width: 22px;
  height: 22px;
  color: #1f2d42;
}
.tabbar-on {
  color: #24775f;
}
.tabbar-on svg {
  color: #24775f;
}

/* edit navigation */
.panel-right .block {
  padding-left: 24px;
}
.block-type {
  padding-top: 22px;
  padding-bottom: 30px;
}
.type-cards {
  display: flex;
  gap: 12px;
  margin-top: 37px;
}
.type-card {
  width: 130px;
  height: 148px;
  position: relative;
  display: flex;
  flex-direction: column;
  align-items: center;
  padding: 30px 20px 0;
  border: 1px solid #c9d8ef;
  border-radius: 6px;
  text-align: center;
  line-height: 18px;
}
.type-ico {
  width: 54px;
  height: 52px;
  flex: none;
  margin-bottom: 20px;
}
.type-selected {
  border: 2px solid #116dff;
  padding-top: 20px;
}
.type-selected .type-ico {
  margin-bottom: 20px;
}
.type-check {
  position: absolute;
  top: -6px;
  right: -6px;
  width: 18px;
  height: 18px;
  padding: 3px;
  border-radius: 50%;
  background-color: #116dff;
  display: flex;
}
.block-labels {
  padding-top: 21px;
  padding-bottom: 29px;
}
.toggle-row {
  height: 20px;
  margin-top: 12px;
  display: flex;
  align-items: center;
  white-space: nowrap;
  font-size: 13.700px;
}
.toggle {
  width: 30px;
  height: 16px;
  margin-left: 7px;
  flex: none;
  display: flex;
  justify-content: flex-end;
  padding: 1px;
  border-radius: 8px;
  background-color: #116dff;
}
.toggle span {
  width: 14px;
  height: 14px;
  border-radius: 50%;
  background-color: #fff;
}
.block-icons {
  padding-top: 21px;
  border-bottom: none;
}
.icon-row {
  height: 48px;
  margin-bottom: 12px;
  display: flex;
  align-items: center;
  gap: 12px;
  font-size: 14px;
}
.block-icons h3 {
  margin-bottom: 13px;
}
.icon-box {
  width: 48px;
  height: 48px;
  flex: none;
  display: flex;
  align-items: center;
  justify-content: center;
  border: 1px solid #dfe5eb;
  border-radius: 8px;
}
.icon-box svg {
  width: 20px;
  height: 20px;
  color: #2d3a4e;
}

/* windows taskbar */
.taskbar {
  height: 40px;
  flex: none;
  margin-top: auto;
  display: flex;
  align-items: stretch;
  background-color: #1c1c1c;
  font-family: "Open Sans", "Liberation Sans", sans-serif;
  font-size: 11.600px;
  color: #fff;
}
.taskbar > * {
  flex: none;
}
.start {
  width: 48px;
  display: flex;
  align-items: center;
  justify-content: center;
}
.start svg {
  width: 17px;
  height: 17px;
}
.task-search {
  width: 344px;
  display: flex;
  align-items: center;
  background-color: #f1f1f1;
  border: 1px solid #b8b8b8;
  border-bottom: none;
  padding-left: 11px;
  color: #222;
  font-size: 14px;
}
.task-search svg {
  width: 18px;
  height: 18px;
  margin-right: 11px;
}
.task-view {
  width: 17px;
  height: 17px;
  align-self: center;
  margin: 0 23px 0 15px;
}
.task-item {
  width: 152px;
  display: flex;
  align-items: center;
  padding-left: 6px;
  margin-right: 4px;
  border-bottom: 3px solid #5da9e6;
  white-space: nowrap;
  overflow: hidden;
}
.task-current {
  width: 160px;
  background-color: #4a4a4a;
  margin-right: 5px;
}
.task-dl {
  margin-left: 4px;
  padding-left: 4px;
}
.task-logo {
  width: 24px;
  height: 24px;
  margin-right: 4px;
  flex: none;
}
.task-app {
  width: 24px;
  height: 24px;
  align-self: center;
  margin-left: 12px;
}
.task-outlook {
  margin-left: 26px;
  margin-right: 17px;
}
.task-time {
  margin-right: 0;
}
.weather-sun {
  width: 20px;
  height: 20px;
  align-self: center;
  margin-left: 141px;
}
.weather-temp {
  align-self: center;
  margin-left: 10px;
  font-size: 13px;
}
.weather-text {
  align-self: center;
  margin-left: 9px;
  font-size: 13px;
}
.tray {
  display: flex;
  align-items: center;
  gap: 14px;
  margin-left: 26px;
}
.tray svg {
  width: 18px;
  height: 18px;
}
.clock {
  width: 70px;
  margin-left: 7px;
  display: flex;
  flex-direction: column;
  justify-content: center;
  align-items: center;
  gap: 3px;
  line-height: 15px;
}
.notify {
  width: 40px;
  margin-left: 12px;
  position: relative;
  display: flex;
  align-items: center;
  padding-left: 1px;
}
.notify svg {
  width: 18px;
  height: 18px;
  margin-bottom: 4px;
}
.notify-count {
  position: absolute;
  left: 11px;
  top: 16px;
  width: 16px;
  height: 16px;
  border-radius: 50%;
  background-color: #2b2b2b;
  border: 1px solid #999;
  font-size: 10px;
  line-height: 14px;
  text-align: center;
}
```
